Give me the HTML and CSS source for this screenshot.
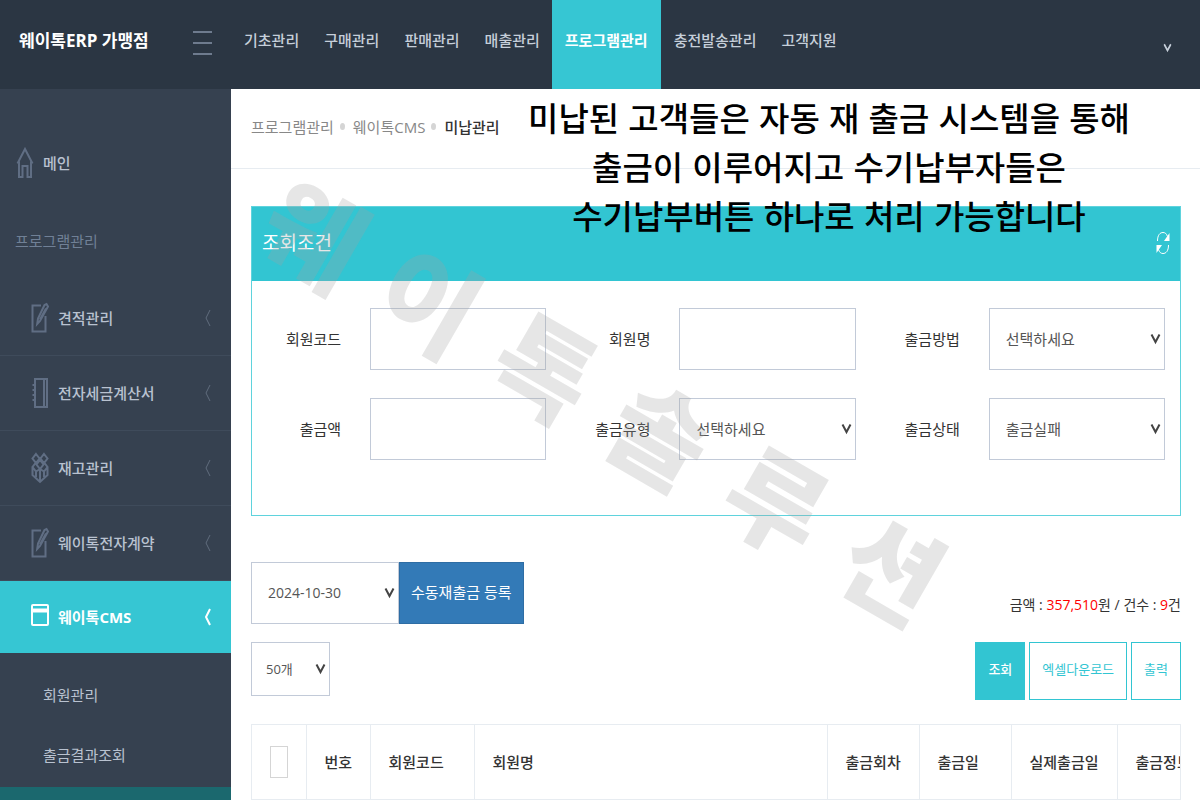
FILE: index.html
```
<!DOCTYPE html>
<html lang="ko">
<head>
<meta charset="utf-8">
<meta name="viewport" content="width=device-width, initial-scale=1">
<title>웨이톡ERP 가맹점 - 미납관리</title>
<link rel="stylesheet" href="styles.css">
</head>
<body>
<svg class="defs" aria-hidden="true">
  <symbol id="i-note" viewBox="0 0 18 32"><path d="M10 3.500H1.500v26h13V14M17 4.500l-1.500-2.500-2 1L7 16.500l-.8 5.500 2.800-3L17 4.500zM9 17.500l6-11"/></symbol>
  <symbol id="i-book" viewBox="0 0 18 32"><path d="M4 2h12v28H4zM13 2v28M1.500 8H5M1.500 13H5M1.500 18H5M1.500 23H5"/></symbol>
  <symbol id="i-stock" viewBox="0 0 18 32"><path d="M5 2l3.500 4.500L5 11 1.500 6.500zM13 2l3.500 4.500L13 11 9.500 6.500zM9 8l3.500 4.500L9 17l-3.500-4.500zM4.500 11L1.500 15l3.500 4.500L9 17M13.500 11l3 4-3.500 4.500L9 17v13M1.500 15v8L9 30l7.500-7v-8M5 19.500V25M13 19.500V25"/></symbol>
  <symbol id="i-left" viewBox="0 0 8 20"><path d="M6 2L2 10l4 8"/></symbol>
  <symbol id="i-down" viewBox="0 0 10 12"><path d="M1 1.500L5 9 9 1.500"/></symbol>
</svg>

<header class="topbar">
  <div class="brand">
    <a class="brand-name" href="#">웨이톡ERP 가맹점</a>
    <button class="menu-toggle" type="button" aria-label="메뉴"><span></span><span></span><span></span></button>
  </div>
  <nav class="topnav">
    <a href="#">기초관리</a>
    <a href="#">구매관리</a>
    <a href="#">판매관리</a>
    <a href="#">매출관리</a>
    <a class="active" href="#">프로그램관리</a>
    <a href="#">충전발송관리</a>
    <a href="#">고객지원</a>
  </nav>
  <button class="user-toggle" type="button" aria-label="사용자 메뉴"><svg viewBox="0 0 10 12"><use href="#i-down"/></svg></button>
</header>

<div class="layout">
  <nav class="sidebar">
    <a class="home" href="#"><svg class="icon" viewBox="0 0 18 32"><path d="M1.500 16.500L9 2l7.500 14.500M3 14.500V30h3.500V19h5v11H15V14.500"/></svg>메인</a>
    <h3 class="side-title">프로그램관리</h3>
    <a class="item" href="#"><svg class="icon"><use href="#i-note"/></svg>견적관리<svg class="arrow"><use href="#i-left"/></svg></a>
    <a class="item" href="#"><svg class="icon"><use href="#i-book"/></svg>전자세금계산서<svg class="arrow"><use href="#i-left"/></svg></a>
    <a class="item" href="#"><svg class="icon"><use href="#i-stock"/></svg>재고관리<svg class="arrow"><use href="#i-left"/></svg></a>
    <a class="item" href="#"><svg class="icon"><use href="#i-note"/></svg>웨이톡전자계약<svg class="arrow"><use href="#i-left"/></svg></a>
    <a class="item active" href="#"><svg class="icon" viewBox="0 0 18 32"><rect x="1" y="4" width="16" height="20" rx="1"/><path d="M1 9.500h16" stroke-width="4"/></svg>웨이톡CMS<svg class="arrow"><use href="#i-left"/></svg></a>
    <div class="submenu">
      <a href="#">회원관리</a>
      <a href="#">출금결과조회</a>
    </div>
    <div class="current"></div>
  </nav>

  <main class="main">
    <ol class="crumbs">
      <li><a href="#">프로그램관리</a></li>
      <li><a href="#">웨이톡CMS</a></li>
      <li>미납관리</li>
    </ol>

    <p class="caption">미납된 고객들은 자동 재 출금 시스템을 통해<br>출금이 이루어지고 수기납부자들은<br>수기납부버튼 하나로 처리 가능합니다</p>
    <div class="watermark" aria-hidden="true"><span>웨</span><span>이</span><span>톡</span><span>솔</span><span>루</span><span>션</span></div>

    <div class="content">
      <section class="panel">
        <div class="panel-head">
          <h2>조회조건</h2>
          <button class="reload" type="button" aria-label="새로고침"><svg viewBox="0 0 14 24"><path d="M1.500 10C1.500 4 4 1.500 7 1.500c2 0 3.500 1 4.500 4M12.500 14c0 6-2.500 8.500-5.500 8.500-2 0-3.500-1-4.500-4"/><path class="solid" d="M13.500 2v8H8zM.5 22v-8H6z"/></svg></button>
        </div>
        <form class="filters">
          <div class="field"><label for="code">회원코드</label><div class="control"><input id="code" type="text"></div></div>
          <div class="field"><label for="name">회원명</label><div class="control"><input id="name" type="text"></div></div>
          <div class="field"><label for="method">출금방법</label><div class="control"><span class="select"><select id="method"><option>선택하세요</option></select><svg><use href="#i-down"/></svg></span></div></div>
          <div class="field"><label for="amount">출금액</label><div class="control"><input id="amount" type="text"></div></div>
          <div class="field"><label for="type">출금유형</label><div class="control"><span class="select"><select id="type"><option>선택하세요</option></select><svg><use href="#i-down"/></svg></span></div></div>
          <div class="field"><label for="state">출금상태</label><div class="control"><span class="select"><select id="state"><option>출금실패</option></select><svg><use href="#i-down"/></svg></span></div></div>
        </form>
      </section>

      <div class="toolbar">
        <div class="retry">
          <span class="select date"><select aria-label="출금일"><option>2024-10-30</option></select><svg><use href="#i-down"/></svg></span><button class="btn-blue" type="button">수동재출금 등록</button>
        </div>
        <p class="summary">금액 : <b>357,510</b>원 / 건수 : <b>9</b>건</p>
      </div>
      <div class="toolbar second">
        <span class="select count"><select aria-label="표시 개수"><option>50개</option></select><svg><use href="#i-down"/></svg></span>
        <div class="actions">
          <button class="btn solid" type="button">조회</button>
          <button class="btn" type="button">엑셀다운로드</button>
          <button class="btn" type="button">출력</button>
        </div>
      </div>

      <div class="table-wrap">
        <table>
          <colgroup><col class="w-check"><col class="w-no"><col class="w-code"><col><col class="w-md"><col class="w-md"><col class="w-lg"><col class="w-xl"></colgroup>
          <thead>
            <tr><th><input type="checkbox" aria-label="전체 선택"></th><th>번호</th><th>회원코드</th><th>회원명</th><th>출금회차</th><th>출금일</th><th>실제출금일</th><th>출금정보</th></tr>
          </thead>
        </table>
      </div>
    </div>
  </main>
</div>
</body>
</html>
```
FILE: styles.css
```
* { box-sizing: border-box; }

body {
  margin: 0;
  min-height: 100vh;
  display: flex;
  flex-direction: column;
  font-family: "Open Sans", "Noto Sans CJK KR", sans-serif;
  font-size: 15px;
  line-height: 24px;
  color: #333;
  background: #fff;
}

a { color: inherit; text-decoration: none; }
button, input, select { font: inherit; color: inherit; margin: 0; border-radius: 0; }
h2, h3, p, ol { margin: 0; padding: 0; font-weight: 400; }
svg { fill: none; stroke: currentColor; flex: none; }
.defs { position: absolute; width: 0; height: 0; }

/* Top bar */
.topbar { display: flex; height: 89px; background: #2b3643; color: #c6cfda; }
.brand {
  width: 231px;
  flex: none;
  display: flex;
  align-items: center;
  justify-content: space-between;
  padding: 0 19px 7px;
}
.brand-name { font-size: 17px; font-weight: 700; color: #fff; }
.menu-toggle {
  display: flex;
  flex-direction: column;
  gap: 9px;
  width: 19px;
  padding: 4px 0 0;
  border: 0;
  background: none;
}
.menu-toggle span { height: 2px; background: #6e7b8e; }
.topnav { display: flex; font-weight: 500; }
.topnav a { display: flex; align-items: center; padding: 0 12px 9px 13px; }
.topnav .active { padding-right: 13px; background: #36c6d3; color: #fff; font-weight: 700; }
.user-toggle {
  margin-left: auto;
  padding: 6px 28px 0 0;
  border: 0;
  background: none;
}
.user-toggle svg { display: block; width: 9px; height: 10px; stroke-width: 2; }

/* Sidebar */
.layout { flex: 1; display: flex; }
.sidebar {
  width: 231px;
  flex: none;
  display: flex;
  flex-direction: column;
  background: #364150;
  color: #b9c2d0;
  font-weight: 500;
}
.sidebar .icon { width: 18px; height: 32px; margin-right: 9px; color: #606e84; stroke-width: 2; }
.home { display: flex; align-items: center; height: 74px; margin-top: 37px; padding-left: 16px; }
.side-title { height: 81px; padding: 29px 0 0 15px; font-size: 15px; color: #708096; }
.item {
  display: flex;
  align-items: center;
  height: 75px;
  padding: 0 19px 0 31px;
  border-bottom: 1px solid #3f4b5b;
}
.arrow { width: 8px; height: 20px; margin-left: auto; color: #606c7d; stroke-width: 1; }
.item.active { height: 72px; border: 0; background: #36c6d3; color: #fff; font-weight: 700; }
.item.active .icon, .item.active .arrow { color: #fff; }
.item.active .arrow { stroke-width: 2; }
.submenu { padding: 12px 0 2px; font-weight: 400; }
.submenu a { display: flex; align-items: center; height: 60px; padding-left: 43px; }
.current { flex: 1; background: #1b686e; }

/* Page head */
.main { position: relative; flex: 1; min-width: 0; }
.crumbs {
  display: flex;
  align-items: center;
  height: 80px;
  padding: 0 20px 4px;
  border-bottom: 1px solid #e7ecf1;
  list-style: none;
  color: #888;
}
.crumbs li { display: flex; align-items: center; }
.crumbs li + li::before {
  content: "";
  width: 5px;
  height: 7px;
  margin: 0 8px 0 6px;
  border-radius: 50%;
  background: #d5d5d5;
}
.crumbs li:last-child { color: #333; font-weight: 500; }

.caption {
  position: absolute;
  z-index: 2;
  top: 4px;
  left: 226px;
  width: 744px;
  font-family: "Noto Sans CJK KR", sans-serif;
  font-size: 33px;
  font-weight: 500;
  line-height: 49px;
  text-align: center;
  color: #000;
}
.watermark {
  position: absolute;
  z-index: 1;
  top: 238px;
  left: -8px;
  display: flex;
  gap: 37px;
  font-size: 105px;
  font-weight: 900;
  line-height: 140px;
  font-family: "Noto Sans CJK KR", sans-serif;
  color: rgba(162, 162, 162, .27);
  transform: rotate(30deg);
  pointer-events: none;
}

/* Search panel */
.content { padding: 37px 19px 0 20px; }
.panel { border: 1px solid #5fd3dd; }
.panel-head {
  display: flex;
  align-items: center;
  justify-content: space-between;
  height: 74px;
  padding: 0 10px 2px;
  background: #32c5d2;
  color: #fff;
}
.panel-head h2 { font-size: 19px; }
.reload { padding: 0; border: 0; background: none; }
.reload svg { display: block; width: 14px; height: 24px; stroke-width: 1; }
.reload .solid { fill: currentColor; stroke: none; }
.filters {
  display: grid;
  grid-template-columns: repeat(3, 1fr);
  row-gap: 28px;
  padding: 27px 0 55px;
}
.field { display: grid; grid-template-columns: 1fr 2fr; align-items: center; }
.field label { padding-right: 14px; text-align: right; }
.control { padding: 0 15px; }
.control input, .select select {
  display: block;
  width: 100%;
  height: 62px;
  padding: 0 16px;
  border: 1px solid #c2cad8;
  background: transparent;
  color: #555;
  appearance: none;
}
.select { position: relative; display: block; }
.select svg {
  position: absolute;
  top: 50%;
  right: 4px;
  width: 11px;
  height: 12px;
  margin-top: -6px;
  color: #444;
  stroke-width: 2;
  pointer-events: none;
}

/* Toolbars */
.toolbar { display: flex; align-items: flex-start; justify-content: space-between; margin-top: 46px; }
.toolbar.second { margin-top: 18px; }
.retry { display: flex; }
.date { width: 148px; font-size: 14px; }
.btn-blue { padding: 0 11px 2px; border: 1px solid #2e6da4; background: #337ab7; color: #fff; }
.summary { padding-top: 31px; font-size: 14px; }
.summary b { font-weight: 400; color: #f00; }
.count { width: 79px; font-size: 13px; }
.count select { height: 54px; padding: 0 14px; }
.actions { display: flex; gap: 4px; }
.btn {
  height: 58px;
  padding: 0 12px 4px;
  border: 1px solid #32c5d2;
  background: #fff;
  color: #32c5d2;
  font-size: 13px;
}
.btn.solid { background: #32c5d2; color: #fff; font-weight: 500; }

/* Result table */
.table-wrap { margin-top: 24px; overflow: hidden; border: 1px solid #e7ecf1; }
table { width: calc(100% + 40px); table-layout: fixed; border-collapse: collapse; }
th { height: 74px; padding: 0 18px; text-align: left; font-weight: 500; white-space: nowrap; }
th + th { border-left: 1px solid #e7ecf1; }
th input { display: block; width: 18px; height: 32px; border: 1px solid #d5d5d5; appearance: none; }
.w-check { width: 54px; }
.w-no { width: 64px; }
.w-code { width: 104px; }
.w-md { width: 92px; }
.w-lg { width: 106px; }
.w-xl { width: 103px; }
```
